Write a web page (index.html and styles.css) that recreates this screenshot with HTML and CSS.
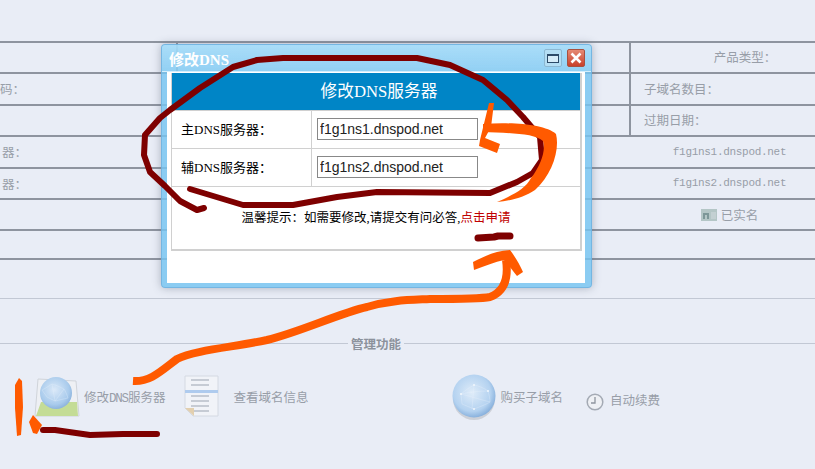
FILE: index.html
```html
<!DOCTYPE html>
<html lang="zh-CN">
<head>
  <meta charset="UTF-8">
  <meta name="viewport" content="width=device-width, initial-scale=1.0">
  <title>修改DNS</title>
  <link rel="stylesheet" href="styles.css">
</head>
<body>

  <!-- Domain info table -->
  <section class="info-table">
    <div class="row">
      <div class="cell-left has-divider"></div>
      <div class="cell-mid"></div>
      <div class="cell-right has-divider centered">产品类型：</div>
    </div>
    <div class="row">
      <div class="cell-left label-short">码：</div>
      <div class="cell-mid"></div>
      <div class="cell-right has-divider">子域名数目：</div>
    </div>
    <div class="row">
      <div class="cell-left"></div>
      <div class="cell-mid"></div>
      <div class="cell-right has-divider">过期日期：</div>
    </div>
    <div class="row">
      <div class="cell-left">器：</div>
      <div class="cell-mid"></div>
      <div class="cell-right value mono">f1g1ns1.dnspod.net</div>
    </div>
    <div class="row">
      <div class="cell-left">器：</div>
      <div class="cell-mid"></div>
      <div class="cell-right value mono">f1g1ns2.dnspod.net</div>
    </div>
    <div class="row">
      <div class="cell-left"></div>
      <div class="cell-mid"></div>
      <div class="cell-right value">
        <svg class="badge" width="16" height="12" viewBox="0 0 16 12">
          <rect width="16" height="12" fill="#b4c6c6"/>
          <rect x="10" y="3" width="5" height="7" fill="#c3d0d2"/>
          <path d="M2 10V4h6v6H6V6H4v4z" fill="#7d9798"/>
        </svg>
        已实名
      </div>
    </div>
    <div class="row"></div>
    <div class="row last"></div>
  </section>

  <hr class="rule">

  <!-- Management tools -->
  <section class="tools">
    <div class="legend"><span>管理功能</span></div>
    <div class="tool-row">
      <a class="tool tool-dns">
        <svg width="50" height="42" viewBox="0 0 50 42">
          <defs>
            <radialGradient id="globeA" cx="0.45" cy="0.4" r="0.65">
              <stop offset="0" stop-color="#dbe9f8"/>
              <stop offset="0.7" stop-color="#a9cbec"/>
              <stop offset="1" stop-color="#84acd8"/>
            </radialGradient>
          </defs>
          <path d="M6 3l38 2 3 35H3z" fill="#eef0f4" stroke="#d0d4da"/>
          <path d="M4 40L9 26L45 26L46 40Z" fill="#c4dc96"/>
          <circle cx="24" cy="17" r="16" fill="url(#globeA)"/>
          <path d="M10 14c6-3 8-5 10-6 4 1 8 3 12 5 2 3 3 6 4 9-4 1-9 2-13 3-3-1-5-3-8-4zM20 8c1 6 2 11 3 17M32 13c-3 4-6 8-9 12" fill="none" stroke="#e8f1fb" stroke-width="0.6" stroke-opacity="0.5"/>
        </svg>
        <span class="tool-text">修改<span class="mono-in">DNS</span>服务器</span>
      </a>
      <a class="tool tool-info">
        <svg width="36" height="45" viewBox="0 0 36 45">
          <path d="M1 1h33v40H9l-8-8z" fill="#f1f3f8" stroke="#d4d9e2"/>
          <path d="M7 5h18M7 10h18M7 21h18M7 26h18M7 31h18M10 36h15" stroke="#c6cbd4" stroke-width="2"/>
          <rect x="1" y="15" width="33" height="3" fill="#afcbee"/>
          <path d="M1 33h9v8z" fill="#e2cfaf"/>
        </svg>
        <span class="tool-text">查看域名信息</span>
      </a>
      <a class="tool tool-sub">
        <svg width="44" height="46" viewBox="0 0 44 46">
          <defs>
            <radialGradient id="globeB" cx="0.45" cy="0.42" r="0.62">
              <stop offset="0" stop-color="#dfecf9"/>
              <stop offset="0.7" stop-color="#b4d2f0"/>
              <stop offset="1" stop-color="#7ea9d8"/>
            </radialGradient>
          </defs>
          <ellipse cx="22" cy="25" rx="21" ry="21" fill="#ccd0d8"/>
          <circle cx="22" cy="22" r="21.5" fill="url(#globeB)"/>
          <path d="M9 20c5-4 9-7 13-9 5 1 10 3 14 6 1 4 2 7 2 11-5 3-11 5-16 7-4-2-8-3-12-5zM22 11c-1 8-1 16-2 24M9 20c9-2 18-3 27-3M9 20c8 2 21 6 29 8" fill="none" stroke="#eaf2fb" stroke-width="0.6" stroke-opacity="0.5"/>
          <g fill="#f2f7fd">
            <circle cx="9" cy="20" r="1"/>
            <circle cx="22" cy="11" r="1"/>
            <circle cx="36" cy="17" r="1"/>
            <circle cx="22" cy="35" r="1"/>
          </g>
        </svg>
        <span class="tool-text">购买子域名</span>
      </a>
      <a class="tool tool-renew">
        <svg width="18" height="18" viewBox="0 0 18 18">
          <circle cx="9" cy="9" r="7.8" fill="#eef0f4" stroke="#a4aab4" stroke-width="1.5"/>
          <path d="M9 4v6H5" fill="none" stroke="#8e949e" stroke-width="1.3"/>
        </svg>
        <span class="tool-text">自动续费</span>
      </a>
    </div>
  </section>

  <!-- Popup window -->
  <div class="dialog">
    <div class="dialog-title">
      <span class="dialog-name">修改DNS</span>
      <span class="win-btn win-max"><i></i></span>
      <span class="win-btn win-close">
        <svg width="12" height="12" viewBox="0 0 12 12"><path d="M1.5 1.5l9 9M10.5 1.5l-9 9" stroke="#fff" stroke-width="2.6"/></svg>
      </span>
    </div>
    <div class="dialog-body">
      <table class="dns-table">
        <colgroup>
          <col class="col-label">
          <col>
        </colgroup>
        <tr><th colspan="2">修改DNS服务器</th></tr>
        <tr>
          <td class="dns-label">主DNS服务器：</td>
          <td><input type="text" value="f1g1ns1.dnspod.net"></td>
        </tr>
        <tr>
          <td class="dns-label">辅DNS服务器：</td>
          <td><input type="text" value="f1g1ns2.dnspod.net"></td>
        </tr>
        <tr>
          <td colspan="2" class="dns-note">温馨提示：如需要修改,请提交有问必答,<a>点击申请</a></td>
        </tr>
      </table>
    </div>
  </div>

  <!-- Hand-drawn marks on top of the screenshot -->
  <svg class="marks" width="815" height="469" viewBox="0 0 815 469">
    <g fill="none" stroke="#7e0000" stroke-width="6" stroke-linecap="round" stroke-linejoin="round">
      <path d="M204 208L197 210L180 201L165 186L150 172L144 155L145 135L160 118L170 110L200 88L233 67L257 60L283 58L417 58L450 65L483 80L507 100L523 117L540 137L542 160L533 173L517 182L490 193L377 192L337 197L293 205L243 205L190 189"/>
      <path d="M478 238L494 237L498 236L510 236" stroke-width="7"/>
      <path d="M43 430L55 430L90 435L123 434L157 434"/>
    </g>
    <g fill="#ff5a00">
      <!-- arrow to the name server inputs -->
      <path d="M483 124C510 122 545 124 556 134C560 150 552 175 535 190C525 197 510 201 497 202C510 196 525 190 531 178C541 165 546 150 543 141C535 133 505 133 483 132Z"/>
      <path d="M489 103L494 103L491 127L485 138L500 144L497 153L479 146L480 140Z"/>
      <!-- arrow head over the apply link -->
      <path d="M473 262C485 256 495 251 510 250C516 258 520 265 523 272L517 276C512 270 508 264 504 260C495 262 485 266 474 270Z"/>
      <!-- tick beside the first tool -->
      <path d="M19 378L22 381L23 407L21 435L17 436L15 408L15 385Z"/>
      <path d="M33 415L42 425L37 434L33 433L29 422Z"/>
    </g>
    <path d="M133 381C150 382 160 372 177 359C195 350 235 347 267 340C300 332 340 313 367 307C390 300 410 300 430 299C460 299 480 299 490 297C503 292 509 280 506 260" fill="none" stroke="#ff5a00" stroke-width="8"/>
  </svg>

</body>
</html>
```
FILE: styles.css
```css
/* Global Styles */
body {
  margin: 0;
  height: 469px;
  overflow: hidden;
  position: relative;
  background: #e9edf6;
  color: #989ea8;
  font-family: "Liberation Serif", "Noto Sans CJK SC", sans-serif;
  font-size: 12.5px;
}

/* Info table */
.info-table {
  padding-top: 41px;
}

.row {
  display: flex;
  height: 29.4px;
  border-top: 2px solid #8e949f;
}

.row.last {
  height: 0;
}

.row:nth-child(7) {
  height: 27px;
}

.cell-left {
  width: 178px;
  padding-right: 151px;
  box-sizing: border-box;
  display: flex;
  justify-content: flex-end;
  align-items: center;
  white-space: nowrap;
}

.cell-left.label-short {
  padding: 0 153px 2px 0;
}

.cell-mid {
  flex: 1;
}

.cell-right {
  width: 186px;
  box-sizing: border-box;
  padding-left: 15px;
  display: flex;
  align-items: center;
  white-space: nowrap;
}

.has-divider {
  border-left: 2px solid #8e949f;
}

.cell-left.has-divider {
  border-left: 0;
  border-right: 2px solid #8e949f;
}

.cell-right.has-divider {
  padding: 0 0 2px 13px;
}

.cell-right.centered {
  justify-content: center;
  padding: 0 0 2px 44px;
}

.cell-right.value {
  padding: 0 0 0 15px;
  justify-content: center;
}

.mono {
  font-family: "Liberation Mono", monospace;
  font-size: 11px;
  letter-spacing: -0.3px;
}

.badge {
  margin-right: 4px;
}

.rule {
  margin: 38px 0 0;
  border: 0;
  border-top: 1px solid #c2c8d4;
}

/* Tools */
.tools {
  padding-top: 36px;
}

.legend {
  display: flex;
  align-items: center;
  gap: 3px;
  height: 16px;
  font-weight: bold;
  color: #8c929c;
}

.legend::before {
  content: "";
  width: 348px;
  border-top: 1px solid #c2c8d4;
}

.legend::after {
  content: "";
  flex: 1;
  border-top: 1px solid #c2c8d4;
}

.tool-row {
  display: flex;
  align-items: center;
  height: 46px;
  margin-top: 23px;
  padding-left: 32px;
}

.tool {
  display: flex;
  align-items: center;
}

.tool-text {
  white-space: nowrap;
  padding-bottom: 2px;
}

.tool-dns {
  gap: 2px;
}

.tool-info {
  gap: 13px;
  margin-left: 19px;
}

.tool-sub {
  gap: 4px;
  margin-left: 144px;
}

.tool-renew {
  gap: 6px;
  margin-left: 23px;
  padding-top: 6px;
}

.tool-renew svg {
  margin-top: 3px;
}

.mono-in {
  font-family: "Liberation Mono", monospace;
  letter-spacing: -1.2px;
}

/* Popup */
.dialog {
  position: absolute;
  left: 161px;
  top: 44px;
  width: 431px;
  height: 244px;
  box-sizing: border-box;
  padding: 0 6px 6px 5px;
  border: 1px solid rgba(110, 175, 220, 0.75);
  border-radius: 4px;
  background: rgba(118, 196, 240, 0.82);
  box-shadow: 0 0 8px rgba(90, 100, 120, 0.45);
}

.dialog-title {
  display: flex;
  align-items: center;
  height: 27px;
  margin: 0 -6px 0 -5px;
  padding: 0 6px 0 7px;
  background: linear-gradient(rgba(190, 232, 252, 0.6), rgba(170, 222, 250, 0.25));
  border-bottom: 1px solid rgba(255, 255, 255, 0.5);
  border-radius: 3px 3px 0 0;
  box-sizing: border-box;
}

.dialog-name {
  flex: 1;
  color: #fff;
  font-size: 15px;
  font-weight: bold;
}

.win-btn {
  display: flex;
  align-items: center;
  justify-content: center;
  width: 18px;
  height: 18px;
  box-sizing: border-box;
  border-radius: 2px;
}

.win-max {
  margin-right: 5px;
  background: #b4def4;
  border: 1px solid #8cb8d2;
}

.win-max i {
  display: block;
  width: 12px;
  height: 9px;
  box-sizing: border-box;
  border: 1px solid #2c4a68;
  border-top-width: 2px;
  background: #d6ecf8;
}

.win-close {
  background: linear-gradient(#e58a74, #c8402a);
  border: 1px solid #a8503f;
}

.dialog-body {
  background: #fff;
  height: 211px;
  padding: 1px 4px 0;
  box-sizing: border-box;
  font-family: "Liberation Serif", "Noto Sans CJK SC", sans-serif;
  color: #000;
}

.dns-table {
  width: 411px;
  table-layout: fixed;
  border-collapse: collapse;
  border: 1px solid #d0d0d0;
  border-width: 0 2px 2px 1px;
}

.col-label {
  width: 140px;
}

.dns-table th {
  height: 37px;
  padding: 0 0 3px 6px;
  box-sizing: border-box;
  background: #0085c6;
  color: #fff;
  font-size: 16.7px;
  font-weight: normal;
}

.dns-table td {
  height: 37px;
  padding: 0 0 0 5px;
  border: 1px solid #d0d0d0;
}

.dns-table td.dns-label {
  padding: 0 0 2px 9px;
  box-sizing: border-box;
  font-size: 13px;
}

.dns-table td.dns-note {
  height: 64px;
  padding: 0 0 2px;
  box-sizing: border-box;
  text-align: center;
  font-size: 12.5px;
}

.dns-note a {
  color: #c00000;
}

.dns-table input {
  display: block;
  width: 161px;
  height: 22px;
  box-sizing: border-box;
  padding: 0 2px;
  border: 1px solid #888;
  font-family: "Liberation Sans", sans-serif;
  font-size: 14px;
  color: #222;
}

/* Hand-drawn marks */
.marks {
  position: absolute;
  left: 0;
  top: 0;
  pointer-events: none;
}
```
